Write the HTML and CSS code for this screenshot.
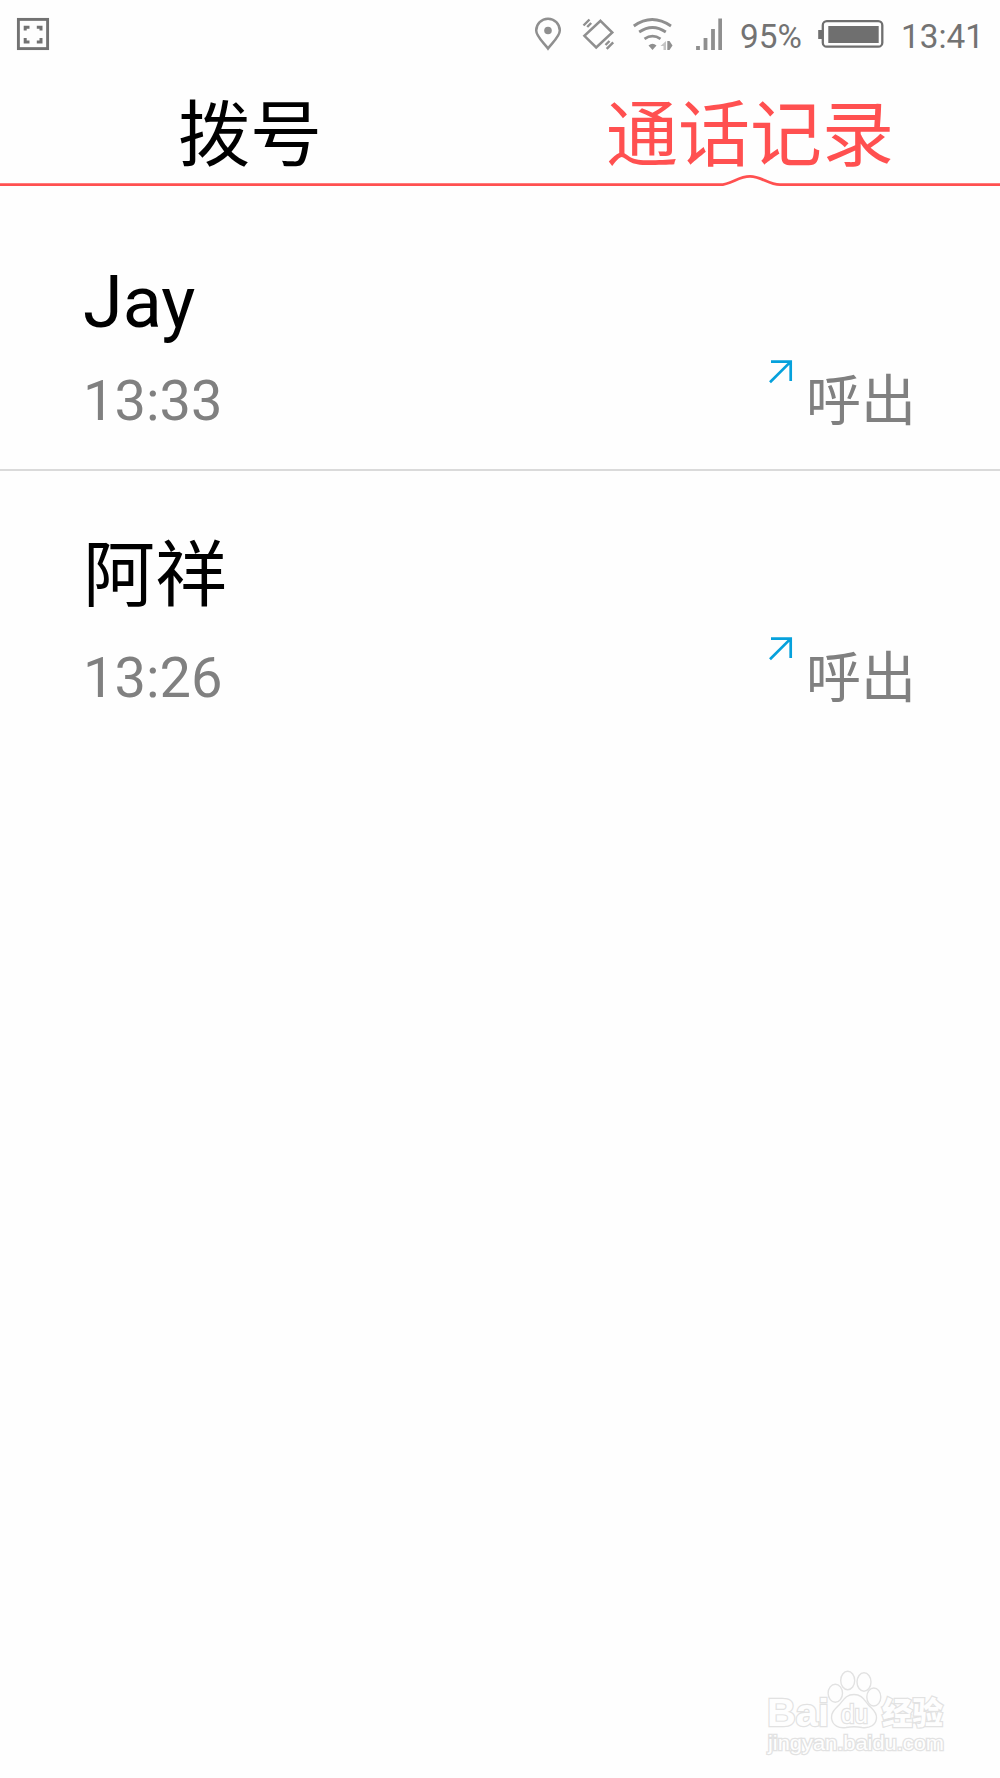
FILE: index.html
```html
<!DOCTYPE html>
<html lang="zh-CN">
<head>
<meta charset="utf-8">
<title>通话记录</title>
<link rel="stylesheet" href="styles.css">
</head>
<body>
<div class="screen">
  <header class="status">
    <svg class="capture" width="34" height="34" viewBox="0 0 34 34" fill="none" stroke="#727272">
      <rect x="2.4" y="2.4" width="29.2" height="29.2" stroke-width="2.9"/>
      <path d="M9.2 13.500V10.200H13.500M20.800 10.200H25V13.500M25 21V25H20.800M13.500 25H9.2V21" stroke-width="3"/>
    </svg>
    <svg class="signals" width="190" height="36" viewBox="532 16 190 36" fill="none" stroke="#8f8f8f" stroke-width="2.5">
      <path d="M548 48.5C544 43 536.2 36.5 536.2 30.5A11.8 11.8 0 0 1 559.8 30.5C559.8 36.5 552 43 548 48.5Z"/>
      <circle cx="548" cy="30.5" r="3.8" fill="#8f8f8f" stroke="none"/>
      <path d="M600.5 20.8L612.3 32.5L596.2 47.5L584.4 35.8Z"/>
      <path d="M583.5 25.5L589.5 19.5M587.2 27L591.2 23M605.5 45L609.5 41M606.7 48.8L613.2 42.3" stroke-width="2.4"/>
      <path d="M633.8 26Q652 13 671 26" stroke-width="2.8"/>
      <path d="M639.2 32Q652.5 23 665.8 32M644.5 38.8Q652.5 33.5 660.5 38.8" stroke-width="2.8"/>
      <path d="M648.5 45.5Q652.5 42 656.5 45.5L652.5 50Z" fill="#8f8f8f" stroke="none"/>
      <path d="M666 41V50H663.5V46H660.5Z" fill="#c4c4c4" stroke="none"/>
      <path d="M667.3 50V41H669.5L672.5 45.5L669.5 50Z" fill="#8f8f8f" stroke="none"/>
      <path d="M698 50V46M705.5 50V38M713 50V29M720.2 50V18.5" stroke-width="3.8"/>
    </svg>
    <span class="percent">95%</span>
    <svg class="battery" width="66" height="30" viewBox="0 0 66 30">
      <rect x="4.8" y="2.2" width="59.5" height="25.5" rx="4" fill="none" stroke="#6f6f6f" stroke-width="2.3"/>
      <path d="M0.2 11H4V20H0.2ZM10.3 7H60.7V24H10.3Z" fill="#6f6f6f"/>
    </svg>
    <span class="clock">13:41</span>
  </header>

  <nav class="tabs">
    <a class="tab">拨号</a>
    <a class="tab active">通话记录</a>
  </nav>
  <svg class="tabline" width="1000" height="14" viewBox="0 0 1000 14" fill="none" stroke="#ff5050" stroke-width="2.8">
    <path d="M0 10.7H720C731 10.7 738 2.4 750 2.4S768 10.7 780 10.7H1000"/>
  </svg>

  <main class="calls">
    <section class="call">
      <h2 class="name">Jay</h2>
      <div class="detail">
        <time>13:33</time>
        <svg class="arrow" width="24" height="24" viewBox="0 0 24 24" fill="none" stroke="#06a1dc" stroke-width="2.7"><path d="M2 1.6H21.7V21M21.7 1.6L1 22.3"/></svg>
        <span class="kind">呼出</span>
      </div>
    </section>
    <section class="call">
      <h2 class="name">阿祥</h2>
      <div class="detail">
        <time>13:26</time>
        <svg class="arrow" width="24" height="24" viewBox="0 0 24 24" fill="none" stroke="#06a1dc" stroke-width="2.7"><path d="M2 1.6H21.7V21M21.7 1.6L1 22.3"/></svg>
        <span class="kind">呼出</span>
      </div>
    </section>
  </main>

  <footer class="brand">
    <svg width="190" height="96" viewBox="760 1664 190 96" fill="#fefefe" stroke="#e2e2e2" stroke-width="1.4">
      <g class="outlined">
        <text x="767" y="1726" font-size="39" font-weight="700" textLength="62" lengthAdjust="spacingAndGlyphs">Bai</text>
        <text class="cjk" x="882" y="1724" font-size="31" font-weight="900" textLength="61" lengthAdjust="spacingAndGlyphs">经验</text>
        <text x="768" y="1750" font-size="19.5" textLength="176" lengthAdjust="spacingAndGlyphs">jingyan.baidu.com</text>
      </g>
      <ellipse cx="835.3" cy="1693.3" rx="7.2" ry="9"/>
      <ellipse cx="847.7" cy="1680.5" rx="7" ry="9.2"/>
      <ellipse cx="864" cy="1682" rx="7" ry="9.2"/>
      <ellipse cx="873.8" cy="1697" rx="7" ry="9"/>
      <path d="M854 1694.5C846 1694.5 843.5 1700 839 1705C834 1710 831 1713 831.5 1718C832.5 1726 839 1728.5 846 1727.5Q854 1726 862 1727.5C870 1728.5 876 1725 876.5 1718C877 1712 872 1709 868.5 1705C864 1700 862 1694.5 854 1694.5Z"/>
      <text class="outlined" x="841" y="1723" font-size="25" textLength="27" lengthAdjust="spacingAndGlyphs">du</text>
    </svg>
  </footer>
</div>
</body>
</html>
```
FILE: styles.css
```css
body {
  margin: 0;
  background: #fefefe;
  font-family: Roboto, "Noto Sans CJK SC", sans-serif;
}

.screen {
  display: flex;
  flex-direction: column;
  width: 1000px;
  height: 1778px;
  overflow: hidden;
}

.status {
  display: flex;
  align-items: flex-start;
  height: 84px;
  padding: 16px 0 0 16px;
  box-sizing: border-box;
  font-size: 33.3px;
  line-height: 42px;
  color: #737373;
}

.signals { margin-left: auto; }
.capture { margin-top: 1px; }
.percent { width: 79px; margin-left: 18px; }
.battery { margin: 3px 0 0 -1px; }
.clock { width: 99px; margin-left: 17px; }

.tabs {
  display: grid;
  grid-template-columns: 1fr 1fr;
  height: 90px;
}

.tab {
  text-align: center;
  font-size: 72px;
  line-height: 103px;
  color: #000;
}

.active { color: #ff5050; }

.tabline { flex: none; }

.calls { padding-top: 6px; }

.call {
  height: 277px;
  box-sizing: border-box;
  padding: 67px 84px 0 83px;
}

.call:first-child { border-bottom: 2px solid #dadada; }
.call + .call { padding-top: 63px; }

.name {
  margin: 0 0 24px;
  font-size: 72px;
  font-weight: 400;
  line-height: 84px;
}

.call + .call .name { margin-bottom: 28px; }

.detail {
  display: flex;
  font-size: 56px;
  line-height: 64px;
  color: #808080;
}

.arrow { margin: -9px 13px 0 auto; }
.kind { font-size: 55px; }

.brand {
  display: flex;
  justify-content: flex-end;
  margin-top: auto;
  padding: 0 50px 18px 0;
}

.outlined {
  font-family: "Liberation Sans", sans-serif;
  paint-order: stroke;
  stroke-width: 2.4px;
}

.cjk { font-family: "Noto Sans CJK SC", sans-serif; }
```
